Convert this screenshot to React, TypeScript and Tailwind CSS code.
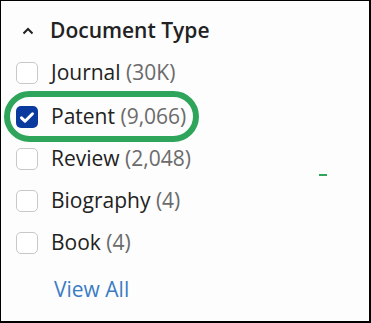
import React from 'react';

const items = [
  { label: 'Journal', count: '30K', checked: false },
  { label: 'Patent', count: '9,066', checked: true },
  { label: 'Review', count: '2,048', checked: false },
  { label: 'Biography', count: '4', checked: false },
  { label: 'Book', count: '4', checked: false },
];

const App = () => {
  return (
    <div
      className="relative w-[371px] h-[323px] bg-[#fdfdfd] border-black border-t border-l border-r-2 border-b-2 overflow-hidden"
      style={{ fontFamily: '"Open Sans", "Noto Sans", sans-serif' }}
    >
      <div className="flex items-center h-[51px] pl-[21px] pt-[8px]">
        <svg width="12" height="8" viewBox="0 0 12 8" className="mr-[16px]">
          <path d="M1.5 6.5 L6 2 L10.5 6.5" fill="none" stroke="#222" strokeWidth="2" />
        </svg>
        <span className="text-[21px] font-semibold text-[#222]">Document Type</span>
      </div>

      <ul>
        {items.map((item, i) => (
          <li key={item.label} className={`flex items-center pl-[15px] ${i === 0 ? 'h-[44px] pb-[2px]' : 'h-[42px]'}`}>
            {item.checked ? (
              <span className="flex items-center justify-center w-[22px] h-[22px] rounded-[5px] bg-[#0b3a9e]">
                <svg width="16" height="13" viewBox="0 0 16 13">
                  <path d="M2.5 6.8 L6 10.2 L13.5 2.8" fill="none" stroke="#fff" strokeWidth="3" strokeLinecap="round" strokeLinejoin="round" />
                </svg>
              </span>
            ) : (
              <span className="w-[22px] h-[22px] rounded-[5px] border border-[#c8c8c8] bg-white" />
            )}
            <span className="ml-[13px] text-[21px] text-[#222]">
              {item.label} <span className="text-[#6b6b6b]">({item.count})</span>
            </span>
          </li>
        ))}
      </ul>

      <a href="#" className="block mt-[10px] ml-[53px] text-[21px] text-[#3a7cc4]">
        View All
      </a>

      <div className="absolute left-[3px] top-[90px] w-[195px] h-[51px] rounded-[26px] border-[6px] border-[#2fa55c]" />
      <div className="absolute left-[318px] top-[173px] w-[8px] h-[2px] bg-[#2fa55c]" />
    </div>
  );
};

export default App;
